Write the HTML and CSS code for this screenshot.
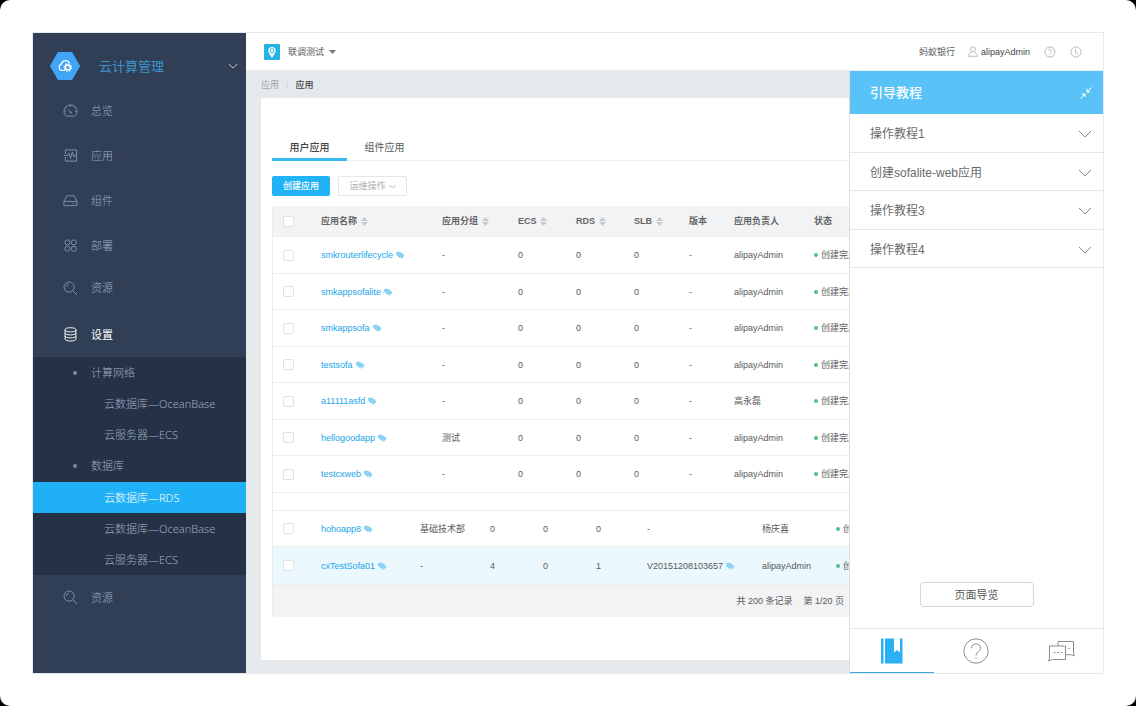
FILE: index.html
```html
<!DOCTYPE html>
<html lang="zh-CN">
<head>
<meta charset="utf-8">
<title>云计算管理</title>
<link rel="stylesheet" href="styles.css">
</head>
<body>
<svg class="defs" width="0" height="0" aria-hidden="true">
  <symbol id="search" viewBox="0 0 16 16"><circle cx="6.5" cy="6.5" r="5.4"/><path d="M10.5 10.5 15 15M3.6 6.2a3 3 0 0 1 2.6-2.6"/></symbol>
  <symbol id="tag" viewBox="0 0 9 9"><path d="M.5 1h3.200l2.800 3-2.700 2.800L.5 3.800z" stroke="none"/><path d="M.7 1.200h3l2.600 2.800-2.500 2.600L.7 3.700zM5 1.500l3.200 3.200-3 3" stroke-width=".8"/></symbol>
  <symbol id="sort" viewBox="0 0 7 9"><path d="M3.500 0 7 4H0zM0 5h7L3.500 9z"/></symbol>
  <symbol id="down" viewBox="0 0 14 8"><path d="m1 1 6 6 6-6"/></symbol>
</svg>
<div class="app">
  <nav class="sidebar">
    <button class="brand" type="button">
      <svg class="hex" viewBox="0 0 30 28"><path d="M8.500 1h13l7.500 13-7.500 13h-13L1 14z" fill="#41a6f7" stroke="#41a6f7" stroke-width="2" stroke-linejoin="round"/><path d="M15 18.500h-3a3.300 3.300 0 0 1-.5-6.400 4.200 4.200 0 0 1 8-.9" fill="none" stroke="#fff" stroke-width="1.200"/><circle cx="17.800" cy="15.500" r="2.500" fill="none" stroke="#fff" stroke-width="1.600"/><circle cx="17.800" cy="15.500" r="3.700" fill="none" stroke="#fff" stroke-width="1.200" stroke-dasharray="1.500 1.400"/></svg>
      <span class="brand-name">云计算管理</span>
      <svg class="brand-arrow"><use href="#down"/></svg>
    </button>
    <a class="item" href="#"><svg viewBox="0 0 16 16"><path d="M3.500 14h9c1.500-1.300 2.500-3 2.500-5a7 7 0 0 0-14 0c0 2 1 3.700 2.500 5zM8 10 5.800 7.200M8 2v2M1.500 9H3M13 9h1.500M3.500 4.500l1 1M12.500 4.500l-1 1"/><circle cx="8.500" cy="10.300" r=".7"/></svg>总览</a>
    <a class="item" href="#"><svg viewBox="0 0 16 16"><path d="M2.500 6.500V2h12v12h-12V9.800M1 8h4l1.500-2.500L8 11l2-6.500 1.500 5 .8-1.500h2.200"/></svg>应用</a>
    <a class="item" href="#"><svg viewBox="0 0 16 16"><path d="M1 9 4 3h8l3 6v4.500H1zM1 9h14M9.500 11.300h1M12 11.300h1"/></svg>组件</a>
    <a class="item" href="#"><svg viewBox="0 0 16 16"><circle cx="4.700" cy="4.700" r="2.700"/><circle cx="11.500" cy="4.700" r="2.700"/><circle cx="4.700" cy="11.500" r="2.700"/><circle cx="11.500" cy="11.500" r="2.700"/></svg>部署</a>
    <a class="item short" href="#"><svg><use href="#search"/></svg>资源</a>
    <a class="item open" href="#"><svg viewBox="0 0 16 16"><ellipse cx="8" cy="3" rx="5.800" ry="2.200"/><path d="M2.200 3v9.800c0 2.900 11.600 2.900 11.600 0V3M2.200 6.300c0 2.800 11.600 2.800 11.600 0M2.200 9.500c0 2.800 11.600 2.800 11.600 0"/></svg>设置</a>
    <div class="submenu">
      <a class="group" href="#">计算网络</a>
      <a class="leaf" href="#">云数据库—OceanBase</a>
      <a class="leaf" href="#">云服务器—ECS</a>
      <a class="group" href="#">数据库</a>
      <a class="leaf current" href="#">云数据库—RDS</a>
      <a class="leaf" href="#">云数据库—OceanBase</a>
      <a class="leaf" href="#">云服务器—ECS</a>
    </div>
    <a class="item" href="#"><svg><use href="#search"/></svg>资源</a>
  </nav>

  <div class="workspace">
    <header class="topbar">
      <button class="project" type="button">
        <svg class="pin" viewBox="0 0 16 16"><rect width="16" height="16" rx="1" fill="#25b3e4"/><path d="M8 14C6 11 4.300 9 4.300 6.600a3.700 3.700 0 0 1 7.400 0C11.700 9 10 11 8 14z" fill="#fff"/><circle cx="8" cy="6.600" r="2" fill="#fff" stroke="#25b3e4"/></svg>
        联调测试 <svg class="caret" viewBox="0 0 7 4"><path d="M0 0h7L3.500 4z"/></svg>
      </button>
      <a class="bank" href="#">蚂蚁银行</a>
      <a class="user" href="#"><svg viewBox="0 0 10 11"><circle cx="5" cy="3.300" r="2.500"/><path d="M3.500 5.500C3.500 7 .7 7 .7 10.300h8.600C9.300 7 6.500 7 6.500 5.500"/></svg>alipayAdmin</a>
      <button class="round" type="button" aria-label="帮助"><svg viewBox="0 0 12 12"><circle cx="6" cy="6" r="5"/><path d="M4.500 4.700c0-2 3-2 3 0 0 1.200-1.500 1-1.500 2.300M6 8v1"/></svg></button>
      <button class="round" type="button" aria-label="历史"><svg viewBox="0 0 12 12"><circle cx="6" cy="6" r="5"/><path d="M5.500 3v3.500L8 8"/></svg></button>
    </header>
    <div class="body">
      <main class="content">
        <div class="crumbs"><a href="#">应用</a><span class="slash">/</span><b>应用</b></div>
        <section class="card">
          <div class="tabs"><button class="tab active" type="button">用户应用</button><button class="tab" type="button">组件应用</button></div>
          <div class="actions">
            <button class="primary" type="button">创建应用</button>
            <button class="ghost" type="button">运维操作 <svg><use href="#down"/></svg></button>
          </div>
          <div class="grid">
            <table class="apps">
              <colgroup><col class="w48"><col class="w121"><col class="w76"><col class="w58"><col class="w58"><col class="w55"><col class="w45"><col class="w80"><col></colgroup>
              <thead><tr><th><input type="checkbox" aria-label="全选"></th><th>应用名称 <svg><use href="#sort"/></svg></th><th>应用分组 <svg><use href="#sort"/></svg></th><th>ECS <svg><use href="#sort"/></svg></th><th>RDS <svg><use href="#sort"/></svg></th><th>SLB <svg><use href="#sort"/></svg></th><th>版本</th><th>应用负责人</th><th>状态</th></tr></thead>
              <tbody>
                <tr><td><input type="checkbox" aria-label="smkrouterlifecycle"></td><td><a href="#">smkrouterlifecycle</a><svg><use href="#tag"/></svg></td><td>-</td><td>0</td><td>0</td><td>0</td><td>-</td><td>alipayAdmin</td><td class="done">创建完成</td></tr>
                <tr><td><input type="checkbox" aria-label="smkappsofalite"></td><td><a href="#">smkappsofalite</a><svg><use href="#tag"/></svg></td><td>-</td><td>0</td><td>0</td><td>0</td><td>-</td><td>alipayAdmin</td><td class="done">创建完成</td></tr>
                <tr><td><input type="checkbox" aria-label="smkappsofa"></td><td><a href="#">smkappsofa</a><svg><use href="#tag"/></svg></td><td>-</td><td>0</td><td>0</td><td>0</td><td>-</td><td>alipayAdmin</td><td class="done">创建完成</td></tr>
                <tr><td><input type="checkbox" aria-label="testsofa"></td><td><a href="#">testsofa</a><svg><use href="#tag"/></svg></td><td>-</td><td>0</td><td>0</td><td>0</td><td>-</td><td>alipayAdmin</td><td class="done">创建完成</td></tr>
                <tr><td><input type="checkbox" aria-label="a11111asfd"></td><td><a href="#">a11111asfd</a><svg><use href="#tag"/></svg></td><td>-</td><td>0</td><td>0</td><td>0</td><td>-</td><td>高永磊</td><td class="done">创建完成</td></tr>
                <tr><td><input type="checkbox" aria-label="hellogoodapp"></td><td><a href="#">hellogoodapp</a><svg><use href="#tag"/></svg></td><td>测试</td><td>0</td><td>0</td><td>0</td><td>-</td><td>alipayAdmin</td><td class="done">创建完成</td></tr>
                <tr><td><input type="checkbox" aria-label="testcxweb"></td><td><a href="#">testcxweb</a><svg><use href="#tag"/></svg></td><td>-</td><td>0</td><td>0</td><td>0</td><td>-</td><td>alipayAdmin</td><td class="done">创建完成</td></tr>
              </tbody>
            </table>
            <table class="apps more">
              <colgroup><col class="w48"><col class="w99"><col class="w70"><col class="w53"><col class="w53"><col class="w51"><col class="w115"><col class="w74"><col></colgroup>
              <tbody>
                <tr><td><input type="checkbox" aria-label="hohoapp8"></td><td><a href="#">hohoapp8</a><svg><use href="#tag"/></svg></td><td>基础技术部</td><td>0</td><td>0</td><td>0</td><td>-</td><td>杨庆喜</td><td class="done">创建完成</td></tr>
                <tr class="hover"><td><input type="checkbox" aria-label="cxTestSofa01"></td><td><a href="#">cxTestSofa01</a><svg><use href="#tag"/></svg></td><td>-</td><td>4</td><td>0</td><td>1</td><td>V20151208103657<svg class="solid"><use href="#tag"/></svg></td><td>alipayAdmin</td><td class="done">创建完成</td></tr>
              </tbody>
            </table>
            <div class="pager"><span>共 200 条记录</span><span>第 1/20 页</span></div>
          </div>
        </section>
      </main>
      <aside class="guide">
        <div class="guide-head"><h2>引导教程</h2><button type="button" aria-label="收起"><svg viewBox="0 0 12 12"><path d="M11.500.5 7.500 4.500M.5 11.500l4-4"/><path class="fill" d="M6.500 1.500v4h4zM5.500 10.500v-4h-4z"/></svg></button></div>
        <button class="lesson" type="button">操作教程1<svg><use href="#down"/></svg></button>
        <button class="lesson" type="button">创建sofalite-web应用<svg><use href="#down"/></svg></button>
        <button class="lesson" type="button">操作教程3<svg><use href="#down"/></svg></button>
        <button class="lesson" type="button">操作教程4<svg><use href="#down"/></svg></button>
        <button class="tour" type="button">页面导览</button>
        <div class="guide-tabs">
          <button class="on" type="button" aria-label="教程"><svg viewBox="0 0 28 28"><path d="M3 1.500h2.500v25H3zM7 1.500h9v14l3-2.500 3 2.500v-14h2.500v25H7z" fill="#2bb0f3" stroke="none"/></svg></button>
          <button type="button" aria-label="问题"><svg viewBox="0 0 28 28"><circle cx="14" cy="14" r="12.200"/><path d="M9.500 11.200c0-6 9-5.700 9 0 0 3.300-4.500 3.500-4.500 7.300M14 20.500V22"/></svg></button>
          <button type="button" aria-label="消息"><svg viewBox="0 0 28 28"><path d="M2.500 9h16v13.500H5.500L1.500 24l1-3zM11 9V4.500h15.500V15l.7 4-2.700-1.200h-6M6.500 15.500h2M10 15.500h2M13.500 15.500h2M21.500 11.500h1.500"/></svg></button>
        </div>
      </aside>
    </div>
  </div>
</div>
</body>
</html>
```

FILE: styles.css
```css
* { box-sizing: border-box; }
html { background: #000; }
body {
  margin: 0;
  padding: 32px;
  height: 100vh;
  border-radius: 10px;
  background: #fff;
  color: #595959;
  font: 9px/12px "Liberation Sans", "Noto Sans CJK SC", sans-serif;
}
a { color: inherit; text-decoration: none; }
button { padding: 0; border: 0; background: none; color: inherit; font: inherit; }
svg { fill: none; stroke: currentColor; flex: none; }
.defs { position: absolute; }
.app { display: flex; height: 100%; border: 1px solid #e6e9ed; }

.sidebar {
  width: 213px;
  flex: none;
  background: #303f55;
  color: #9dabc4;
  font: 300 11px/16px "Noto Sans", "Noto Sans CJK SC", sans-serif;
}
.brand { display: flex; align-items: center; width: 100%; height: 55px; padding: 11px 8px 0 17px; text-align: left; }
.hex { width: 30px; height: 28px; stroke: none; }
.brand-name { flex: 1; padding-left: 19px; color: #3f93cf; font-size: 13px; font-weight: 400; }
.brand-arrow { width: 10px; height: 6px; color: #fff; }
.item { display: flex; align-items: center; gap: 13px; height: 45px; padding-left: 30px; }
.item svg { width: 15px; height: 15px; color: #8392ad; }
.item.short { height: 40px; }
.item.open { height: 49px; padding-top: 4px; color: #fff; font-weight: 400; }
.item.open svg { color: #fff; }
.submenu { background: #253144; }
.submenu a { display: flex; align-items: center; height: 31px; }
.submenu .group { padding-left: 40px; }
.submenu .leaf + .group { height: 32px; }
.group::before { content: ""; width: 4px; height: 4px; margin-right: 14px; border-radius: 50%; background: #7d8ba5; }
.submenu .leaf { padding-left: 71px; }
.submenu .current { background: #1fb0f5; color: #fff; }

.workspace { flex: 1; min-width: 0; display: flex; flex-direction: column; }
.topbar { display: flex; align-items: center; height: 38px; padding: 0 21px 0 18px; border-bottom: 1px solid #eceef0; }
.project { display: flex; align-items: center; margin-right: auto; }
.pin { width: 16px; height: 16px; margin-right: 8px; stroke: none; }
.caret { width: 7px; height: 4px; margin-left: 5px; fill: #777; stroke: none; }
.user { display: flex; align-items: center; gap: 3px; margin: 0 14px 0 13px; color: #444; }
.user svg { width: 10px; height: 11px; color: #bbb; }
.round { display: flex; color: #bbb; }
.round + .round { margin-left: 14px; }
.round svg { width: 12px; height: 12px; }

.body { flex: 1; min-height: 0; display: flex; }
.content { flex: 1; min-width: 0; display: flex; flex-direction: column; padding: 0 0 13px 15px; overflow: hidden; background: #e6e9ec; }
.crumbs { display: flex; align-items: center; height: 27px; color: #a0a4a8; }
.slash { margin: 0 7px; color: #c8ccd0; }
.crumbs b { color: #444; font-weight: 500; }
.card { flex: 1; padding: 37px 0 0 11px; background: #fff; }
.tabs { display: flex; height: 26px; border-bottom: 1px solid #ebedef; }
.tab { width: 75px; height: 26px; padding-top: 3px; border-bottom: 3px solid transparent; font-size: 10px; }
.tab.active { border-color: #36b9ec; color: #444; font-weight: 500; }
.actions { display: flex; gap: 8px; padding: 15px 0 10px; }
.actions button { display: flex; align-items: center; justify-content: center; height: 20px; border-radius: 2px; }
.primary { width: 58px; background: #22b2f6; color: #fff; font-weight: 500; }
.ghost { width: 69px; gap: 3px; border: 1px solid #e6e6e6; color: #b0b0b0; }
.ghost svg { width: 7px; height: 5px; stroke-width: 2; }

.grid { width: 684px; border-left: 1px solid #ebedf0; border-radius: 3px; overflow: hidden; }
.apps { width: 100%; table-layout: fixed; border-collapse: separate; border-spacing: 0; }
.apps th, .apps td { padding: 0; text-align: left; white-space: nowrap; border-bottom: 1px solid #ebedf0; }
.apps th { height: 31px; background: #f2f3f5; color: #666; font-weight: 600; }
.apps td { height: 37px; }
.apps tr:nth-child(even) td { height: 36px; }
.apps th:first-child, .apps td:first-child { padding-left: 10px; }
.apps a { color: #1ba4ea; }
.apps svg { width: 9px; height: 9px; margin-left: 3px; color: #7ccbf2; fill: #8fd4f7; vertical-align: -2px; }
.apps th svg { width: 7px; margin-left: 1px; fill: #c8cacc; stroke: none; }
.apps .solid { color: #8fd4f7; }
.apps input { display: block; appearance: none; width: 11px; height: 11px; margin: 0; border: 1px solid #dfe1e4; border-radius: 2px; background: #fff; }
.w45 { width: 45px; } .w48 { width: 48px; } .w51 { width: 51px; } .w53 { width: 53px; }
.w55 { width: 55px; } .w58 { width: 58px; } .w70 { width: 70px; } .w74 { width: 74px; }
.w76 { width: 76px; } .w80 { width: 80px; } .w99 { width: 99px; } .w115 { width: 115px; } .w121 { width: 121px; }
.done::before { content: ""; display: inline-block; width: 4px; height: 4px; margin-right: 3px; border-radius: 50%; background: #4fc08d; vertical-align: 1px; }
.more { padding-top: 17px; }
.more tr:first-child td { border-top: 1px solid #ebedf0; }
.more tr.hover td { height: 38px; background: #ebf8fe; }
.pager { display: flex; align-items: center; justify-content: flex-end; gap: 11px; height: 32px; padding-right: 112px; background: #f2f3f5; }

.guide { display: flex; flex-direction: column; width: 254px; flex: none; border-left: 1px solid #dcdfe2; background: #fff; color: #595959; font-size: 12px; line-height: 18px; }
.guide-head { display: flex; align-items: center; justify-content: space-between; height: 43px; padding: 0 11px 0 20px; background: #59c3f8; color: #fff; }
.guide-head h2 { margin: 0; font-size: 13px; font-weight: 500; }
.guide-head button { display: flex; }
.guide-head svg { width: 12px; height: 12px; }
.guide-head .fill { fill: #fff; stroke: none; }
.lesson { display: flex; align-items: center; justify-content: space-between; height: 38px; padding: 2px 11px 0 20px; border-bottom: 1px solid #e4e6e8; color: #6a6a6a; }
.lesson:nth-child(even) { height: 39px; }
.lesson svg { width: 14px; height: 8px; color: #888; }
.tour { width: 114px; height: 25px; margin: auto auto 21px; border: 1px solid #d4d6d8; border-radius: 4px; font-size: 11px; }
.guide-tabs { display: grid; grid-template-columns: repeat(3, 1fr); height: 45px; border-top: 1px solid #e4e6e8; }
.guide-tabs button { display: flex; align-items: center; justify-content: center; color: #8c8c8c; }
.guide-tabs .on { border-bottom: 1px solid #36a9dc; }
.guide-tabs svg { width: 28px; height: 28px; }
```
